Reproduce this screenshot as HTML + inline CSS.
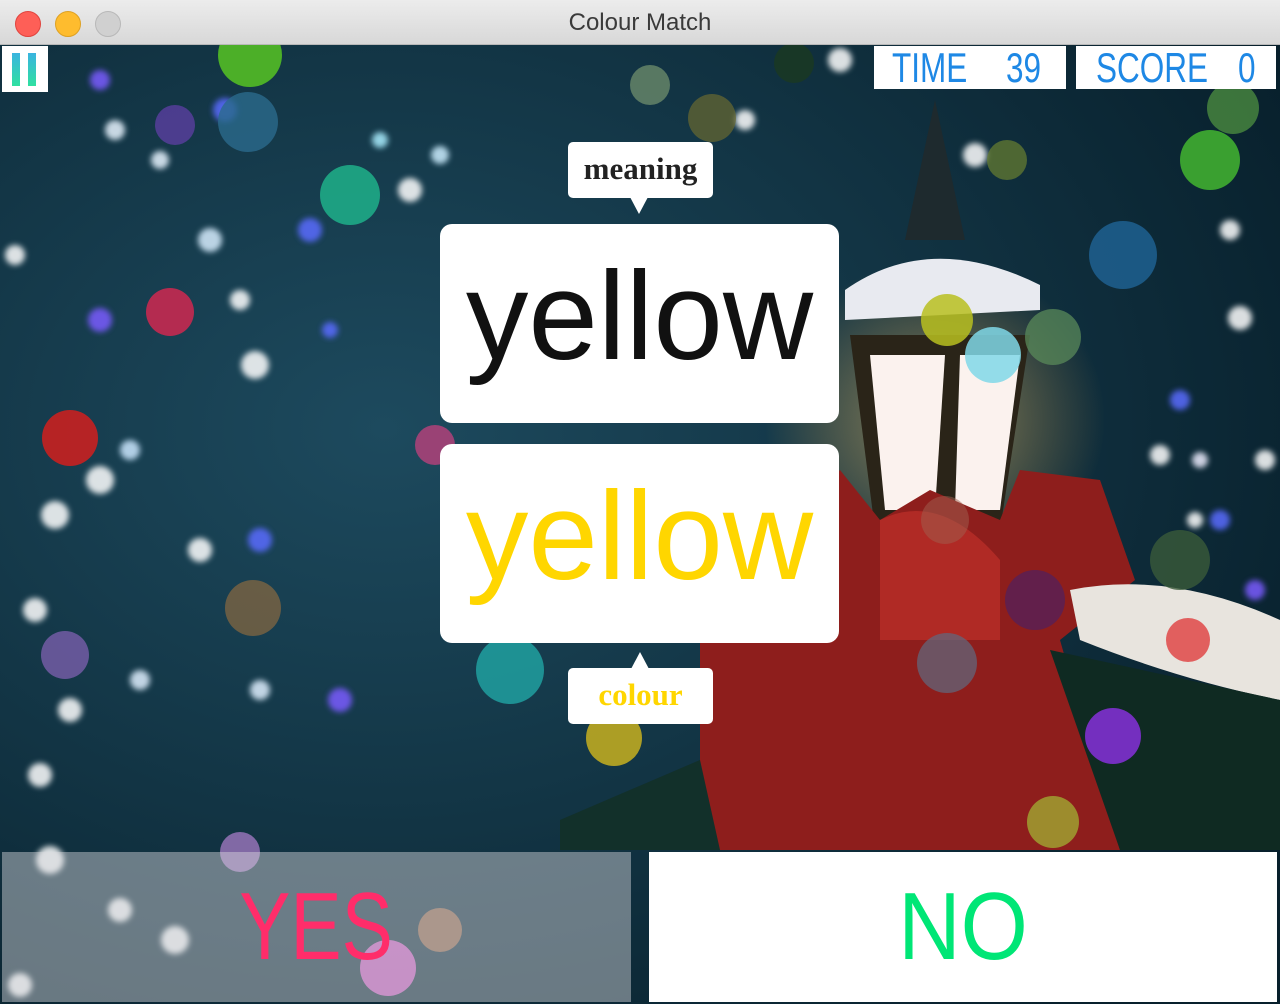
<!DOCTYPE html>
<html><head><meta charset="utf-8"><style>
body{margin:0;width:1280px;height:1004px;overflow:hidden;background:#0b2a36;font-family:"Liberation Sans","DejaVu Sans",sans-serif}
.tb{position:absolute;left:0;top:0;width:1280px;height:44px;background:linear-gradient(#ececec,#d8d8d8);border-bottom:1px solid #b8b8b8;text-align:center;line-height:46px;font-size:24px;color:#3a3a3a}
.dot{position:absolute;top:11px;width:24px;height:24px;border-radius:50%}
.bg{position:absolute;left:0;top:45px}
.box{position:absolute;background:#fff}
.lbl{color:#1e88e5;font-size:42px;line-height:43px}
.lbl span{position:absolute;top:0;transform:scaleX(0.75);transform-origin:left}
.card{position:absolute;left:440px;width:399px;height:199px;background:#fff;border-radius:12px;text-align:center;font-family:"Liberation Sans",sans-serif;font-size:125px;line-height:185px}
.bub{position:absolute;left:568px;width:145px;height:56px;background:#fff;border-radius:5px;text-align:center;font-family:"Liberation Serif",serif;font-weight:bold;font-size:31px;line-height:54px}
.big{position:absolute;top:852px;height:150px;text-align:center;font-size:96px;line-height:150px}
.big span{display:inline-block}
</style></head><body>
<div class="tb">Colour Match</div>
<div class="dot" style="left:15px;background:#fe5f57;border:1px solid #e0443e"></div>
<div class="dot" style="left:55px;background:#febc2e;border:1px solid #dea123"></div>
<div class="dot" style="left:95px;background:#d0d0d0;border:1px solid #b8b8b8"></div>
<svg class="bg" width="1280" height="959" viewBox="0 45 1280 959">
<defs>
<radialGradient id="g1" cx="0.3" cy="0.4" r="0.8"><stop offset="0" stop-color="#1d4a5e"/><stop offset="1" stop-color="#08202c"/></radialGradient>
<radialGradient id="lamp" cx="0.5" cy="0.5" r="0.5"><stop offset="0" stop-color="#ffd27a" stop-opacity="0.9"/><stop offset="1" stop-color="#ffb040" stop-opacity="0"/></radialGradient>
<filter id="bl"><feGaussianBlur stdDeviation="3"/></filter>
</defs>
<rect x="0" y="45" width="1280" height="959" fill="url(#g1)"/>
<g filter="url(#bl)" opacity="0.85">
<circle cx="115" cy="130" r="10" fill="#e8f4ff"/><circle cx="160" cy="160" r="9" fill="#e8f4ff"/><circle cx="210" cy="240" r="12" fill="#d8eeff"/><circle cx="240" cy="300" r="10" fill="#fff"/><circle cx="255" cy="365" r="14" fill="#fff"/><circle cx="15" cy="255" r="10" fill="#fff"/><circle cx="100" cy="480" r="14" fill="#fff"/><circle cx="55" cy="515" r="14" fill="#fff"/><circle cx="200" cy="550" r="12" fill="#fff"/><circle cx="35" cy="610" r="12" fill="#fff"/><circle cx="70" cy="710" r="12" fill="#fff"/><circle cx="40" cy="775" r="12" fill="#fff"/><circle cx="140" cy="680" r="10" fill="#e0f0ff"/><circle cx="260" cy="690" r="10" fill="#e0f0ff"/><circle cx="130" cy="450" r="10" fill="#cce8ff"/><circle cx="340" cy="700" r="12" fill="#7a5cff"/><circle cx="310" cy="230" r="12" fill="#5a6cff"/><circle cx="100" cy="320" r="12" fill="#7a5cff"/><circle cx="260" cy="540" r="12" fill="#5a6cff"/><circle cx="410" cy="190" r="12" fill="#fff"/><circle cx="380" cy="140" r="8" fill="#aef"/><circle cx="225" cy="110" r="12" fill="#5a6cff"/><circle cx="100" cy="80" r="10" fill="#7a5cff"/><circle cx="440" cy="155" r="9" fill="#cef"/><circle cx="330" cy="330" r="8" fill="#5a6cff"/><circle cx="1240" cy="318" r="12" fill="#fff"/><circle cx="1230" cy="230" r="10" fill="#fff"/><circle cx="1180" cy="400" r="10" fill="#5a6cff"/><circle cx="1160" cy="455" r="10" fill="#fff"/><circle cx="1200" cy="460" r="8" fill="#eef"/><circle cx="1265" cy="460" r="10" fill="#fff"/><circle cx="1220" cy="520" r="10" fill="#5a6cff"/><circle cx="1195" cy="520" r="8" fill="#fff"/><circle cx="975" cy="155" r="12" fill="#fff"/><circle cx="840" cy="60" r="12" fill="#fff"/><circle cx="745" cy="120" r="10" fill="#fff"/><circle cx="1255" cy="590" r="10" fill="#7a5cff"/><circle cx="50" cy="860" r="14" fill="#fff"/><circle cx="120" cy="910" r="12" fill="#fff"/><circle cx="175" cy="940" r="14" fill="#fff"/><circle cx="20" cy="985" r="12" fill="#fff"/>
</g>
<ellipse cx="935" cy="420" rx="170" ry="160" fill="url(#lamp)" opacity="0.6"/>
<polygon points="935,100 905,240 965,240" fill="#1e2a2e"/>
<path d="M845 290 Q930 230 1040 285 L1040 310 L845 320Z" fill="#e8eaf0"/>
<polygon points="850,335 1030,335 1000,530 875,530" fill="#2a2418"/>
<polygon points="870,355 945,355 935,510 885,510" fill="#fbf2ee"/>
<polygon points="960,355 1020,355 1000,510 955,510" fill="#fbf2ee"/>
<path d="M700 640 L840 470 L880 520 L930 490 L1000 520 L1020 470 L1100 480 L1135 580 L1060 640 L1120 850 L700 850Z" fill="#8e1e1c"/>
<path d="M880 520 Q940 490 1000 560 L1000 640 L880 640Z" fill="#b02a25"/>
<path d="M1070 590 Q1170 570 1280 620 L1280 700 Q1180 680 1080 640Z" fill="#e8e4de"/>
<path d="M1050 650 L1280 700 L1280 850 L1120 850Z" fill="#0f2a22"/>
<path d="M560 820 L700 760 L720 850 L560 850Z" fill="#12302a"/>
<g>
<circle cx="250" cy="55" r="32" fill="#4caf28"/><circle cx="175" cy="125" r="20" fill="#5a3fa0" opacity=".8"/><circle cx="248" cy="122" r="30" fill="#2a6a8c" opacity=".8"/><circle cx="350" cy="195" r="30" fill="#1fb08a" opacity=".85"/><circle cx="170" cy="312" r="24" fill="#d02850" opacity=".85"/><circle cx="70" cy="438" r="28" fill="#c82020" opacity=".9"/><circle cx="253" cy="608" r="28" fill="#8a6a40" opacity=".7"/><circle cx="65" cy="655" r="24" fill="#9a6acc" opacity=".6"/><circle cx="650" cy="85" r="20" fill="#6a8a6a" opacity=".8"/><circle cx="712" cy="118" r="24" fill="#6a6a30" opacity=".7"/><circle cx="510" cy="670" r="34" fill="#20a0a0" opacity=".85"/><circle cx="614" cy="738" r="28" fill="#c8b020" opacity=".85"/><circle cx="435" cy="445" r="20" fill="#d04080" opacity=".7"/><circle cx="1210" cy="160" r="30" fill="#3aa030"/><circle cx="1233" cy="108" r="26" fill="#4a8a40" opacity=".8"/><circle cx="1123" cy="255" r="34" fill="#1e6090" opacity=".85"/><circle cx="947" cy="320" r="26" fill="#b8c020" opacity=".85"/><circle cx="1053" cy="337" r="28" fill="#5a8a5a" opacity=".75"/><circle cx="993" cy="355" r="28" fill="#80d8e8" opacity=".85"/><circle cx="1007" cy="160" r="20" fill="#6a8030" opacity=".7"/><circle cx="945" cy="520" r="24" fill="#a06050" opacity=".5"/><circle cx="1180" cy="560" r="30" fill="#3a5a3a" opacity=".8"/><circle cx="1035" cy="600" r="30" fill="#502060" opacity=".7"/><circle cx="1188" cy="640" r="22" fill="#e05050" opacity=".9"/><circle cx="947" cy="663" r="30" fill="#606a80" opacity=".7"/><circle cx="1113" cy="736" r="28" fill="#8030d0" opacity=".9"/><circle cx="1053" cy="822" r="26" fill="#a0a030" opacity=".85"/><circle cx="794" cy="63" r="20" fill="#1a3a20" opacity=".8"/><circle cx="240" cy="852" r="20" fill="#b080d0" opacity=".7"/><circle cx="388" cy="968" r="28" fill="#e060d0" opacity=".8"/><circle cx="440" cy="930" r="22" fill="#d08050" opacity=".6"/>
</g>
</svg>
<div class="box" style="left:2px;top:46px;width:46px;height:46px"></div>
<div style="position:absolute;left:12px;top:53px;width:8px;height:33px;background:linear-gradient(#3ab4e0,#30e0a0)"></div>
<div style="position:absolute;left:28px;top:53px;width:8px;height:33px;background:linear-gradient(#3ab4e0,#30e0a0)"></div>
<div class="box lbl" style="left:874px;top:46px;width:192px;height:43px"><span style="left:18px">TIME</span><span style="left:132px">39</span></div>
<div class="box lbl" style="left:1076px;top:46px;width:200px;height:43px"><span style="left:20px">SCORE</span><span style="left:162px">0</span></div>
<div class="bub" style="top:142px;color:#222">meaning</div>
<div style="position:absolute;left:630px;top:197px;width:0;height:0;border-left:9px solid transparent;border-right:9px solid transparent;border-top:17px solid #fff"></div>
<div class="card" style="top:224px;color:#111">yellow</div>
<div class="card" style="top:444px;color:#ffd600">yellow</div>
<div style="position:absolute;left:631px;top:652px;width:0;height:0;border-left:9px solid transparent;border-right:9px solid transparent;border-bottom:17px solid #fff"></div>
<div class="bub" style="top:668px;color:#ffd600">colour</div>
<div class="big" style="left:2px;width:629px;background:rgba(220,220,225,0.45);color:#ff2d6a"><span style="transform:scaleX(0.8)">YES</span></div>
<div class="box big" style="left:649px;width:628px;color:#00e676"><span style="transform:scaleX(0.9)">NO</span></div>
</body></html>
